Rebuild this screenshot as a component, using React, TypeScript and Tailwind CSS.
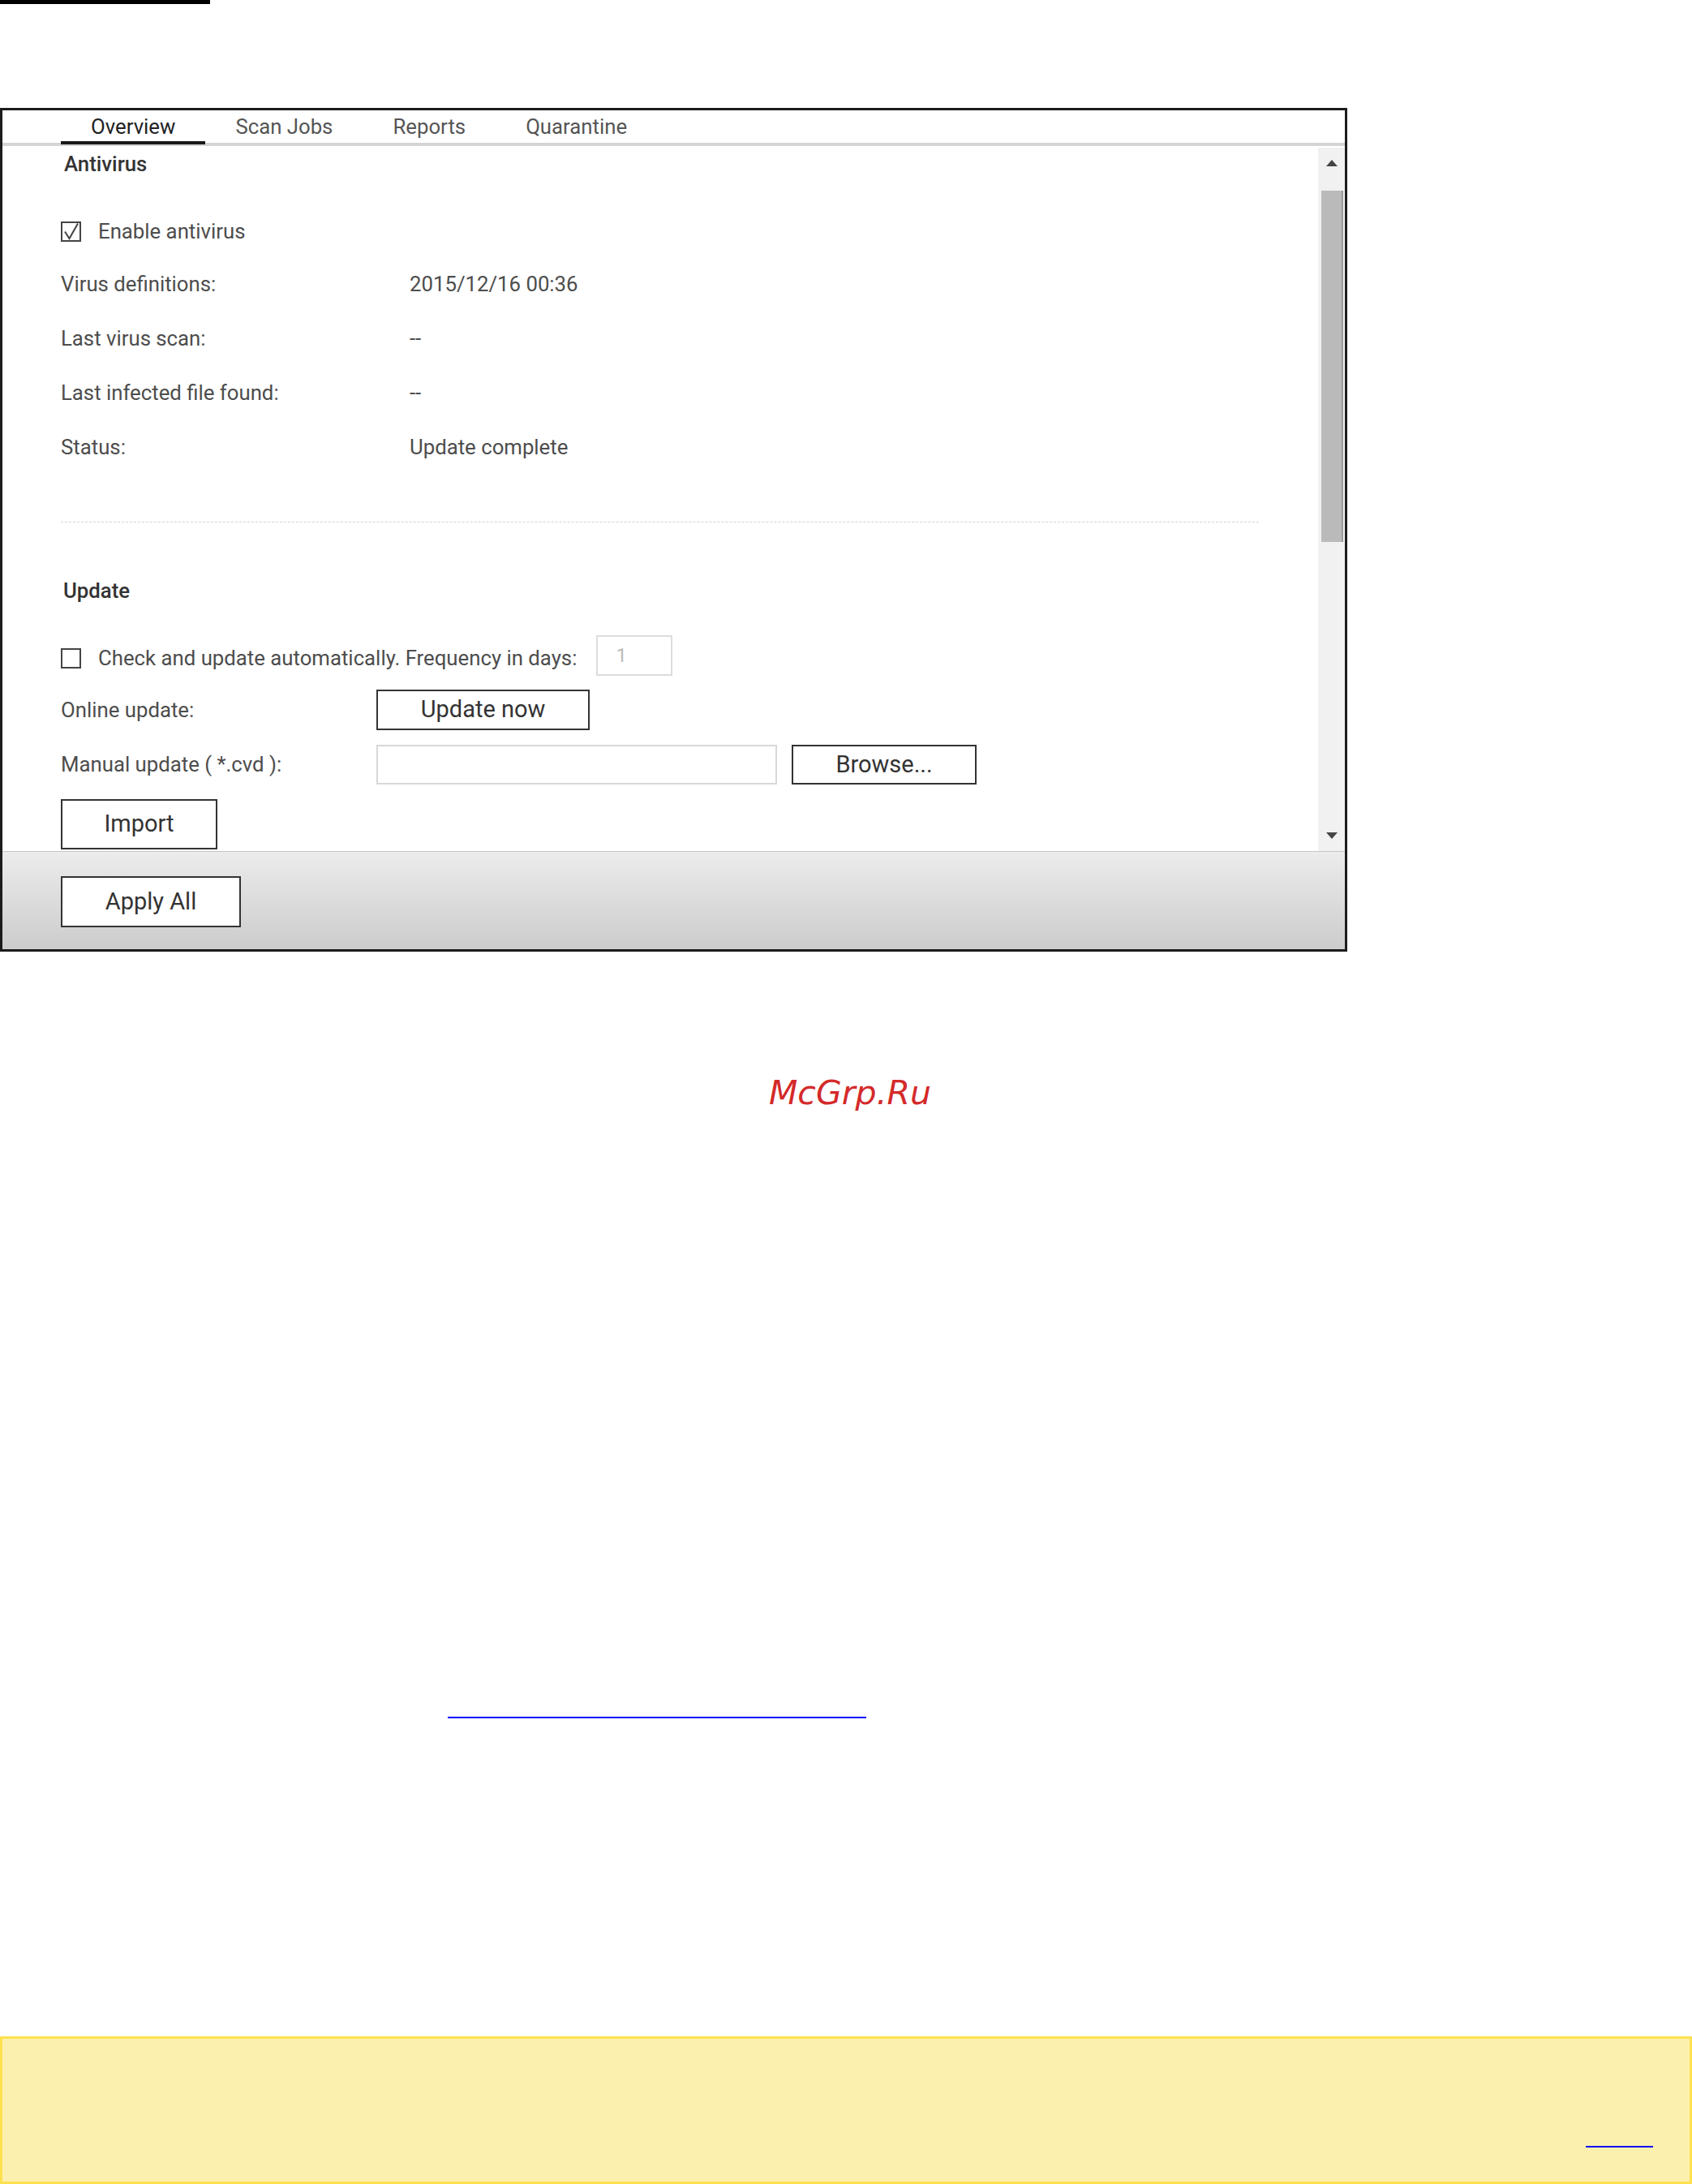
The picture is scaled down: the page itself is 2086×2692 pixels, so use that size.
import React from 'react';

const ui = { fontFamily: 'Roboto, "Liberation Sans", Arial, sans-serif' };

function CheckBox({ checked }: { checked?: boolean }) {
  return (
    <svg width="25" height="25" viewBox="0 0 25 25" className="shrink-0">
      <rect x="1" y="1" width="23" height="23" fill="white" stroke="#444" strokeWidth="2" />
      {checked && <path d="M5 12.5 L10.5 21 L21 2.5" fill="none" stroke="#444" strokeWidth="2" />}
    </svg>
  );
}

function Btn({ label, className }: { label: string; className: string }) {
  return (
    <div
      className={`flex items-center justify-center bg-white border-2 border-[#333] text-[29px] text-[#333] shrink-0 ${className}`}
    >
      {label}
    </div>
  );
}

function InfoRow({ label, value }: { label: string; value: string }) {
  return (
    <div className="flex items-center h-[67px] text-[25.75px] text-[#4d4d4d]">
      <div className="w-[430px]">{label}</div>
      <div>{value}</div>
    </div>
  );
}

const tabs = ['Overview', 'Scan Jobs', 'Reports', 'Quarantine'];

export default function App() {
  return (
    <div className="w-[2086px] h-[2692px] bg-white overflow-hidden" style={ui}>
      <div className="w-[259px] h-[5px] bg-black" />

      {/* window */}
      <div className="mt-[128px] w-[1661px] h-[1040px] border-[3px] border-[#1c1c1c] flex flex-col bg-white">
        <div className="flex h-[44px] pl-[72px] border-b-4 border-[#d4d4d4] shrink-0">
          {tabs.map((t, i) => (
            <div
              key={t}
              className={`relative h-[40px] flex items-center px-[37px] text-[25.75px] ${
                i === 0 ? 'text-[#222]' : 'text-[#555]'
              }`}
            >
              {t}
              {i === 0 && <span className="absolute left-0 right-0 -bottom-[2px] h-[4px] bg-[#1a1a1a]" />}
            </div>
          ))}
        </div>

        <div className="flex h-[869px] shrink-0 overflow-hidden">
          <div className="flex-1 pl-[72px] flex flex-col">
            <div className="h-[44px] flex items-center pl-[4px] text-[25.75px] font-medium text-[#333]">Antivirus</div>
            <div className="h-[36px]" />
            <div className="h-[50px] flex items-center gap-[21px] text-[25.75px] text-[#4d4d4d]">
              <CheckBox checked />
              <span>Enable antivirus</span>
            </div>
            <div className="h-[7px]" />
            <InfoRow label="Virus definitions:" value="2015/12/16 00:36" />
            <InfoRow label="Last virus scan:" value="--" />
            <InfoRow label="Last infected file found:" value="--" />
            <InfoRow label="Status:" value="Update complete" />
            <div className="h-[58px]" />
            <div className="w-[1477px] border-t border-dashed border-[#d6d6d6]" />
            <div className="h-[62px]" />
            <div className="h-[44px] flex items-center pl-[3px] text-[25.75px] font-medium text-[#333]">Update</div>
            <div className="h-[33px]" />
            <div className="h-[50px] flex items-center text-[25.75px] text-[#4d4d4d]">
              <div className="flex items-center gap-[21px] pt-[6px]">
                <CheckBox />
                <span>Check and update automatically. Frequency in days:</span>
              </div>
              <div className="ml-[24px] w-[94px] h-[50px] border-2 border-[#dcdcdc] flex items-center pl-[22px] text-[#bbb] text-[24px]">
                1
              </div>
            </div>
            <div className="h-[17px]" />
            <div className="h-[50px] flex items-center text-[25.75px] text-[#4d4d4d]">
              <div className="w-[389px]">Online update:</div>
              <Btn label="Update now" className="w-[263px] h-[50px]" />
            </div>
            <div className="h-[18px]" />
            <div className="h-[49px] flex items-center text-[25.75px] text-[#4d4d4d]">
              <div className="w-[389px]">Manual update ( *.cvd ):</div>
              <div className="w-[494px] h-[49px] border-2 border-[#d8d8d8] bg-white" />
              <Btn label="Browse..." className="ml-[18px] w-[228px] h-[49px]" />
            </div>
            <div className="h-[18px]" />
            <Btn label="Import" className="w-[193px] h-[62px]" />
          </div>

          {/* scrollbar */}
          <div className="w-[33px] bg-[#f1f1f1] flex flex-col mt-[2px]">
            <div className="h-[53px] flex justify-center pt-[15px]">
              <svg width="14" height="8" viewBox="0 0 14 8">
                <path d="M0 8 L7 0 L14 8 Z" fill="#444" />
              </svg>
            </div>
            <div className="ml-[4px] w-[27px] h-[433px] bg-[#bababa] border-r-2 border-[#9a9a9a]" />
            <div className="flex-1 flex justify-center items-end pb-[15px]">
              <svg width="14" height="8" viewBox="0 0 14 8">
                <path d="M0 0 L14 0 L7 8 Z" fill="#444" />
              </svg>
            </div>
          </div>
        </div>

        <div className="flex-1 border-t border-[#c6c6c6] bg-gradient-to-b from-[#ececec] to-[#cccccc] pl-[72px] pt-[30px]">
          <Btn label="Apply All" className="w-[222px] h-[63px]" />
        </div>
      </div>

      <div
        className="mt-[151px] pl-[948px] text-[41px] leading-[46px] italic text-[#d42a2a]"
        style={{ fontFamily: '"DejaVu Sans", Verdana, sans-serif' }}
      >
        McGrp.Ru
      </div>

      <div className="mt-[746px] ml-[552px] w-[516px] h-[2px] bg-[#0000ff]" />

      <div className="mt-[392px] h-[182px] border-[3px] border-[#fde14e] bg-[#fcf0ae] pt-[132px] pl-[1952px]">
        <div className="w-[83px] h-[2px] bg-[#0000ff]" />
      </div>
    </div>
  );
}
